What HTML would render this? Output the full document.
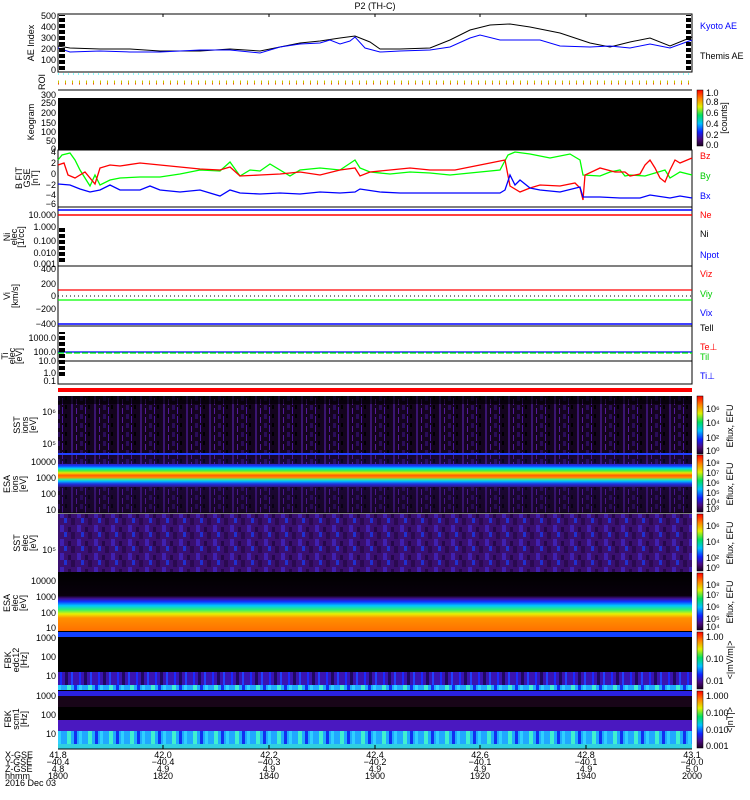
<!DOCTYPE html>
<html><head><meta charset="utf-8"><style>
html,body{margin:0;padding:0;background:#fff;width:750px;height:800px;overflow:hidden}
svg{display:block}
text{font-family:"Liberation Sans",sans-serif;font-size:9px;fill:#000}
</style></head><body>
<svg width="750" height="800" viewBox="0 0 750 800">
<defs>
<linearGradient id="rb" x1="0" y1="1" x2="0" y2="0">
<stop offset="0" stop-color="#1a0020"/><stop offset=".12" stop-color="#4b0a80"/><stop offset=".25" stop-color="#1020ff"/><stop offset=".4" stop-color="#00c0ff"/><stop offset=".55" stop-color="#00e060"/><stop offset=".7" stop-color="#e0f000"/><stop offset=".85" stop-color="#ff8000"/><stop offset="1" stop-color="#ff0000"/>
</linearGradient>
<linearGradient id="esai" x1="0" y1="0" x2="0" y2="1">
<stop offset="0" stop-color="#2a0a50"/><stop offset=".15" stop-color="#3020c0"/><stop offset=".19" stop-color="#1040ff"/><stop offset=".23" stop-color="#00d0ff"/><stop offset=".27" stop-color="#40f040"/><stop offset=".31" stop-color="#f0e000"/><stop offset=".35" stop-color="#ff6000"/><stop offset=".39" stop-color="#ff9000"/><stop offset=".42" stop-color="#40f080"/><stop offset=".45" stop-color="#00c0ff"/><stop offset=".5" stop-color="#2030e0"/><stop offset=".56" stop-color="#301070"/><stop offset="1" stop-color="#200840"/>
</linearGradient>
<linearGradient id="esae" x1="0" y1="0" x2="0" y2="1">
<stop offset="0" stop-color="#000"/><stop offset=".4" stop-color="#08000c"/><stop offset=".45" stop-color="#401090"/><stop offset=".5" stop-color="#1030ff"/><stop offset=".57" stop-color="#00c8ff"/><stop offset=".64" stop-color="#30f070"/><stop offset=".71" stop-color="#e8f000"/><stop offset=".78" stop-color="#ff9000"/><stop offset="1" stop-color="#ff7000"/>
</linearGradient>
<pattern id="noise" width="23" height="9" patternUnits="userSpaceOnUse">
<rect width="23" height="9" fill="#14041f"/><rect x="2" width="2" height="9" fill="#3a1470"/><rect x="7" y="3" width="1" height="6" fill="#551a9a"/><rect x="11" width="3" height="5" fill="#2a0c58"/><rect x="16" y="2" width="1" height="7" fill="#4a18a0"/><rect x="19" y="0" width="2" height="4" fill="#000"/>
</pattern>
<pattern id="noise2" width="17" height="14" patternUnits="userSpaceOnUse">
<rect width="17" height="14" fill="#3a1070"/><rect x="3" width="4" height="7" fill="#2a0a50"/><rect x="9" y="7" width="4" height="7" fill="#4020b0"/><rect x="13" width="3" height="5" fill="#2030d0"/><rect y="9" width="3" height="5" fill="#25084a"/>
</pattern>
<pattern id="fbs" width="19" height="10" patternUnits="userSpaceOnUse">
<rect width="19" height="10" fill="#3a14b0"/><rect x="3" width="2" height="10" fill="#1a2aff"/><rect x="8" width="3" height="10" fill="#200860"/><rect x="14" width="2" height="10" fill="#2040ff"/>
</pattern>
<pattern id="fbc" width="21" height="10" patternUnits="userSpaceOnUse">
<rect width="21" height="10" fill="#20a8ff"/><rect x="4" width="4" height="10" fill="#40f0d0"/><rect x="11" width="3" height="10" fill="#1030f0"/><rect x="16" width="3" height="10" fill="#30d0ff"/>
</pattern>
<pattern id="tk" width="6" height="6" patternUnits="userSpaceOnUse">
<rect width="6" height="4" fill="#000"/>
</pattern>
</defs>

<text x="375" y="9" text-anchor="middle">P2 (TH-C)</text>

<!-- AE panel -->
<rect x="58" y="14" width="634" height="58" fill="#fff" stroke="#000"/>
<polyline fill="none" stroke="#000" points="58,46 70,48 100,49 130,49 160,51 200,51 230,49 260,51 280,47 300,43 320,41 340,38 355,36 370,42 380,49 400,49 430,48 450,40 470,30 490,25 510,24 530,27 560,33 590,43 610,47 630,42 650,38 670,46 692,37"/>
<polyline fill="none" stroke="#00f" points="58,48 70,52 100,51 130,52 160,52 200,50 230,50 260,53 280,47 300,44 320,43 330,40 340,44 350,41 355,37 365,48 380,52 400,51 430,50 450,47 470,38 480,35 500,40 520,40 540,40 560,46 590,47 610,46 630,48 650,44 670,48 692,40"/>
<rect x="59" y="15" width="6" height="56" fill="url(#tk)"/><rect x="686" y="15" width="5" height="56" fill="url(#tk)"/>
<g text-anchor="end"><text x="56" y="19">500</text><text x="56" y="30">400</text><text x="56" y="41">300</text><text x="56" y="52">200</text><text x="56" y="63">100</text><text x="56" y="73">0</text></g>
<text transform="translate(34,43) rotate(-90)" text-anchor="middle">AE Index</text>
<text x="700" y="29" style="fill:#00f">Kyoto AE</text>
<text x="700" y="59">Themis AE</text>

<!-- ROI -->
<line x1="58" y1="74" x2="692" y2="74" stroke="#0ff" stroke-dasharray="1,4"/>
<line x1="58" y1="82" x2="692" y2="82" stroke="#c8c800" stroke-width="3" stroke-dasharray="1,6"/>
<line x1="58" y1="84" x2="692" y2="84" stroke="#f00" stroke-dasharray="1,6"/>
<line x1="58" y1="90" x2="692" y2="90" stroke="#000"/>
<text transform="translate(45,82) rotate(-90)" text-anchor="middle">ROI</text>

<!-- Keogram -->
<rect x="58" y="98" width="634" height="52" fill="#000"/>
<g text-anchor="end"><text x="56" y="98">300</text><text x="56" y="106">250</text><text x="56" y="116">200</text><text x="56" y="126">150</text><text x="56" y="135">100</text><text x="56" y="144">50</text><text x="56" y="152">0</text></g>
<text transform="translate(34,122) rotate(-90)" text-anchor="middle">Keogram</text>
<rect x="697" y="90" width="6" height="56" fill="url(#rb)" stroke="#000" stroke-width=".5"/>
<g font-size="8"><text x="706" y="96">1.0</text><text x="706" y="105">0.8</text><text x="706" y="116">0.6</text><text x="706" y="127">0.4</text><text x="706" y="138">0.2</text><text x="706" y="148">0.0</text></g>
<text transform="translate(727,118) rotate(-90)" text-anchor="middle">[counts]</text>

<!-- B panel -->
<rect x="58" y="150" width="634" height="57" fill="#fff" stroke="#000"/>
<polyline fill="none" stroke="#0f0" stroke-width="1.3" points="58,160 62,155 70,153 75,160 80,170 90,186 95,175 100,185 110,180 120,178 140,177 160,177 180,174 200,170 220,171 230,162 240,176 250,170 260,171 270,164 290,176 300,170 320,168 340,170 355,160 360,168 370,172 390,174 410,172 430,173 450,175 500,170 508,155 515,152 530,154 550,158 570,154 580,160 583,175 600,176 610,172 620,170 625,176 630,175 645,176 655,173 665,170 670,178 680,172 692,175"/>
<polyline fill="none" stroke="#f00" stroke-width="1.3" points="58,165 64,163 68,175 75,178 85,172 95,184 100,168 110,165 120,166 140,163 160,165 180,167 200,169 220,170 230,167 240,176 260,175 280,174 300,172 320,175 340,170 355,168 360,176 370,172 390,170 410,168 430,170 455,170 480,165 505,160 510,186 520,192 530,188 540,185 560,186 575,183 580,188 583,200 585,175 600,168 615,172 625,172 630,176 640,174 645,165 650,160 655,168 660,178 665,182 670,170 675,160 680,163 692,158"/>
<polyline fill="none" stroke="#00f" stroke-width="1.3" points="58,184 70,185 80,189 90,192 100,190 110,185 120,190 140,190 150,186 160,190 180,192 200,190 220,196 230,190 240,193 260,194 280,193 300,194 320,192 340,193 355,192 360,189 380,192 400,193 430,193 460,193 500,193 505,190 510,175 515,185 520,180 530,188 540,190 560,192 580,187 583,197 600,197 620,198 640,198 650,195 670,198 680,196 692,198"/>
<g text-anchor="end"><text x="56" y="155">4</text><text x="56" y="166">2</text><text x="56" y="177">0</text><text x="56" y="188">−2</text><text x="56" y="198">−4</text><text x="56" y="207">−6</text></g>
<text transform="translate(22,178) rotate(-90)" text-anchor="middle" font-size="8">B FIT</text>
<text transform="translate(30,178) rotate(-90)" text-anchor="middle" font-size="7">GSE</text>
<text transform="translate(38,178) rotate(-90)" text-anchor="middle" font-size="8">[nT]</text>
<text x="700" y="159" style="fill:#f00">Bz</text><text x="700" y="179" style="fill:#0c0">By</text><text x="700" y="199" style="fill:#00f">Bx</text>

<!-- N panel -->
<rect x="58" y="207" width="634" height="59" fill="#fff" stroke="#000"/>
<line x1="58" y1="210" x2="692" y2="210" stroke="#00f" stroke-width="1.5"/>
<line x1="58" y1="215" x2="692" y2="215" stroke="#f00" stroke-width="1.5"/>
<rect x="59" y="226" width="6" height="38" fill="url(#tk)"/>
<g text-anchor="end"><text x="56" y="218">10.000</text><text x="56" y="230">1.000</text><text x="56" y="244">0.100</text><text x="56" y="256">0.010</text><text x="56" y="267">0.001</text></g>
<text transform="translate(10,237) rotate(-90)" text-anchor="middle" font-size="8">Ni</text>
<text transform="translate(17,237) rotate(-90)" text-anchor="middle" font-size="7">elec</text>
<text transform="translate(24,237) rotate(-90)" text-anchor="middle" font-size="8">[1/cc]</text>
<text x="700" y="218" style="fill:#f00">Ne</text><text x="700" y="237">Ni</text><text x="700" y="258" style="fill:#00f">Npot</text>

<!-- V panel -->
<rect x="58" y="266" width="634" height="60" fill="#fff" stroke="#000"/>
<line x1="58" y1="290" x2="692" y2="290" stroke="#f00" stroke-width="1.3"/>
<line x1="58" y1="296" x2="692" y2="296" stroke="#000" stroke-dasharray="1,3"/>
<line x1="58" y1="300" x2="692" y2="300" stroke="#0f0" stroke-width="1.3"/>
<line x1="58" y1="324" x2="692" y2="324" stroke="#00f" stroke-width="1.5"/>
<g text-anchor="end"><text x="56" y="272">400</text><text x="56" y="287">200</text><text x="56" y="299">0</text><text x="56" y="312">−200</text><text x="56" y="327">−400</text></g>
<text transform="translate(10,296) rotate(-90)" text-anchor="middle" font-size="8">Vi</text>
<text transform="translate(18,296) rotate(-90)" text-anchor="middle" font-size="8">[km/s]</text>
<text x="700" y="277" style="fill:#f00">Viz</text><text x="700" y="297" style="fill:#0c0">Viy</text><text x="700" y="316" style="fill:#00f">Vix</text>

<!-- T panel -->
<rect x="58" y="326" width="634" height="58" fill="#fff" stroke="#000"/>
<line x1="58" y1="352" x2="692" y2="352" stroke="#00f" stroke-width="1.3"/>
<line x1="58" y1="353" x2="692" y2="353" stroke="#0f0" stroke-width="1.3" stroke-dasharray="6,2"/>
<line x1="58" y1="361" x2="692" y2="361" stroke="#000"/>
<rect x="59" y="332" width="6" height="46" fill="url(#tk)"/>
<g text-anchor="end"><text x="56" y="341">1000.0</text><text x="56" y="355">100.0</text><text x="56" y="364">10.0</text><text x="56" y="376">1.0</text><text x="56" y="384">0.1</text></g>
<text transform="translate(8,356) rotate(-90)" text-anchor="middle" font-size="8">Ti</text>
<text transform="translate(15,356) rotate(-90)" text-anchor="middle" font-size="7">elec</text>
<text transform="translate(22,356) rotate(-90)" text-anchor="middle" font-size="8">[eV]</text>
<text x="700" y="331">Tell</text><text x="700" y="350" style="fill:#f00">Te⊥</text><text x="700" y="360" style="fill:#0c0">Til</text><text x="700" y="379" style="fill:#00f">Ti⊥</text>

<!-- red bar -->
<rect x="58" y="388" width="634" height="4" fill="#f00"/>

<!-- SST ion -->
<rect x="58" y="396" width="634" height="58" fill="url(#noise)"/>
<rect x="58" y="396" width="634" height="8" fill="#000" opacity=".6"/>
<rect x="58" y="453" width="634" height="2" fill="#2040ff"/>
<text x="56" y="415" text-anchor="end">10⁶</text><text x="56" y="447" text-anchor="end">10⁵</text>
<text transform="translate(20,425) rotate(-90)" text-anchor="middle" font-size="8">SST</text>
<text transform="translate(28,425) rotate(-90)" text-anchor="middle" font-size="7">ions</text>
<text transform="translate(36,425) rotate(-90)" text-anchor="middle" font-size="8">[eV]</text>

<!-- ESA ion -->
<rect x="58" y="455" width="634" height="58" fill="url(#esai)"/>
<rect x="58" y="487" width="634" height="26" fill="url(#noise)" opacity=".75"/>
<rect x="58" y="455" width="634" height="9" fill="url(#noise)" opacity=".8"/>
<line x1="58" y1="513" x2="692" y2="513" stroke="#000"/>
<g text-anchor="end"><text x="56" y="465">10000</text><text x="56" y="481">1000</text><text x="56" y="497">100</text><text x="56" y="513">10</text></g>
<text transform="translate(10,484) rotate(-90)" text-anchor="middle" font-size="8">ESA</text>
<text transform="translate(18,484) rotate(-90)" text-anchor="middle" font-size="7">ions</text>
<text transform="translate(26,484) rotate(-90)" text-anchor="middle" font-size="8">[eV]</text>

<!-- SST elec -->
<rect x="58" y="514" width="634" height="58" fill="url(#noise2)"/>
<text x="56" y="553" text-anchor="end">10⁵</text>
<text transform="translate(20,543) rotate(-90)" text-anchor="middle" font-size="8">SST</text>
<text transform="translate(28,543) rotate(-90)" text-anchor="middle" font-size="7">elec</text>
<text transform="translate(36,543) rotate(-90)" text-anchor="middle" font-size="8">[eV]</text>

<!-- ESA elec -->
<rect x="58" y="572" width="634" height="59" fill="url(#esae)"/>
<g text-anchor="end"><text x="56" y="584">10000</text><text x="56" y="600">1000</text><text x="56" y="616">100</text><text x="56" y="631">10</text></g>
<text transform="translate(10,603) rotate(-90)" text-anchor="middle" font-size="8">ESA</text>
<text transform="translate(18,603) rotate(-90)" text-anchor="middle" font-size="7">elec</text>
<text transform="translate(26,603) rotate(-90)" text-anchor="middle" font-size="8">[eV]</text>

<!-- FBK1 -->
<rect x="58" y="631" width="634" height="59" fill="#000"/>
<rect x="58" y="632" width="634" height="5" fill="#1040ff"/>
<rect x="58" y="672" width="634" height="13" fill="url(#fbs)"/>
<rect x="58" y="685" width="634" height="5" fill="url(#fbc)"/>
<g text-anchor="end"><text x="56" y="641">1000</text><text x="56" y="660">100</text><text x="56" y="679">10</text></g>
<text transform="translate(11,660) rotate(-90)" text-anchor="middle" font-size="8">FBK</text>
<text transform="translate(19,660) rotate(-90)" text-anchor="middle" font-size="7">edc12</text>
<text transform="translate(27,660) rotate(-90)" text-anchor="middle" font-size="8">[Hz]</text>

<!-- FBK2 -->
<rect x="58" y="690" width="634" height="59" fill="#000"/>
<rect x="58" y="691" width="634" height="5" fill="#2a20e0"/>
<rect x="58" y="696" width="634" height="11" fill="#180518"/>
<rect x="58" y="720" width="634" height="11" fill="#4a18c0"/>
<rect x="58" y="731" width="634" height="13" fill="url(#fbc)"/>
<rect x="58" y="744" width="634" height="5" fill="#30d0e0"/>
<line x1="58" y1="749" x2="692" y2="749" stroke="#000"/>
<g text-anchor="end"><text x="56" y="699">1000</text><text x="56" y="718">100</text><text x="56" y="737">10</text></g>
<text transform="translate(11,719) rotate(-90)" text-anchor="middle" font-size="8">FBK</text>
<text transform="translate(19,719) rotate(-90)" text-anchor="middle" font-size="7">scm1</text>
<text transform="translate(27,719) rotate(-90)" text-anchor="middle" font-size="8">[Hz]</text>

<!-- colorbars -->
<g stroke="#000" stroke-width=".5">
<rect x="697" y="396" width="6" height="58" fill="url(#rb)"/>
<rect x="697" y="455" width="6" height="57" fill="url(#rb)"/>
<rect x="697" y="514" width="6" height="57" fill="url(#rb)"/>
<rect x="697" y="573" width="6" height="57" fill="url(#rb)"/>
<rect x="697" y="632" width="6" height="57" fill="url(#rb)"/>
<rect x="697" y="691" width="6" height="57" fill="url(#rb)"/>
</g>
<g font-size="8">
<text x="706" y="412">10⁶</text><text x="706" y="426">10⁴</text><text x="706" y="441">10²</text><text x="706" y="454">10⁰</text>
<text x="706" y="466">10⁸</text><text x="706" y="476">10⁷</text><text x="706" y="486">10⁶</text><text x="706" y="496">10⁵</text><text x="706" y="505">10⁴</text><text x="706" y="512">10³</text>
<text x="706" y="529">10⁶</text><text x="706" y="545">10⁴</text><text x="706" y="561">10²</text><text x="706" y="571">10⁰</text>
<text x="706" y="588">10⁸</text><text x="706" y="598">10⁷</text><text x="706" y="610">10⁶</text><text x="706" y="622">10⁵</text><text x="706" y="630">10⁴</text>
<text x="706" y="640">1.00</text><text x="706" y="662">0.10</text><text x="706" y="684">0.01</text>
<text x="706" y="699">1.000</text><text x="706" y="716">0.100</text><text x="706" y="733">0.010</text><text x="706" y="749">0.001</text>
</g>
<g font-size="8" text-anchor="middle">
<text transform="translate(733,426) rotate(-90)">Eflux, EFU</text>
<text transform="translate(733,484) rotate(-90)">Eflux, EFU</text>
<text transform="translate(733,543) rotate(-90)">Eflux, EFU</text>
<text transform="translate(733,602) rotate(-90)">Eflux, EFU</text>
<text transform="translate(733,660) rotate(-90)">&lt;|mV/m|&gt;</text>
<text transform="translate(733,720) rotate(-90)">&lt;|nT|&gt;</text>
</g>

<!-- x ticks -->
<g stroke="#000">
<line x1="163" y1="745" x2="163" y2="749"/><line x1="269" y1="745" x2="269" y2="749"/><line x1="375" y1="745" x2="375" y2="749"/><line x1="480" y1="745" x2="480" y2="749"/><line x1="586" y1="745" x2="586" y2="749"/>
<line x1="163" y1="14" x2="163" y2="17"/><line x1="269" y1="14" x2="269" y2="17"/><line x1="375" y1="14" x2="375" y2="17"/><line x1="480" y1="14" x2="480" y2="17"/><line x1="586" y1="14" x2="586" y2="17"/>
</g>

<!-- bottom labels -->
<g font-size="8">
<text x="5" y="758">X-GSE</text><text x="5" y="765">Y-GSE</text><text x="5" y="772">Z-GSE</text><text x="5" y="779">hhmm</text><text x="5" y="786">2016 Dec 03</text>
</g>
<g font-size="8" text-anchor="middle">
<text x="58" y="758">41.8</text><text x="58" y="765">−40.4</text><text x="58" y="772">4.8</text><text x="58" y="779">1800</text>
<text x="163" y="758">42.0</text><text x="163" y="765">−40.4</text><text x="163" y="772">4.9</text><text x="163" y="779">1820</text>
<text x="269" y="758">42.2</text><text x="269" y="765">−40.3</text><text x="269" y="772">4.9</text><text x="269" y="779">1840</text>
<text x="375" y="758">42.4</text><text x="375" y="765">−40.2</text><text x="375" y="772">4.9</text><text x="375" y="779">1900</text>
<text x="480" y="758">42.6</text><text x="480" y="765">−40.1</text><text x="480" y="772">4.9</text><text x="480" y="779">1920</text>
<text x="586" y="758">42.8</text><text x="586" y="765">−40.1</text><text x="586" y="772">4.9</text><text x="586" y="779">1940</text>
<text x="692" y="758">43.1</text><text x="692" y="765">−40.0</text><text x="692" y="772">5.0</text><text x="692" y="779">2000</text>
</g>
</svg>
</body></html>
